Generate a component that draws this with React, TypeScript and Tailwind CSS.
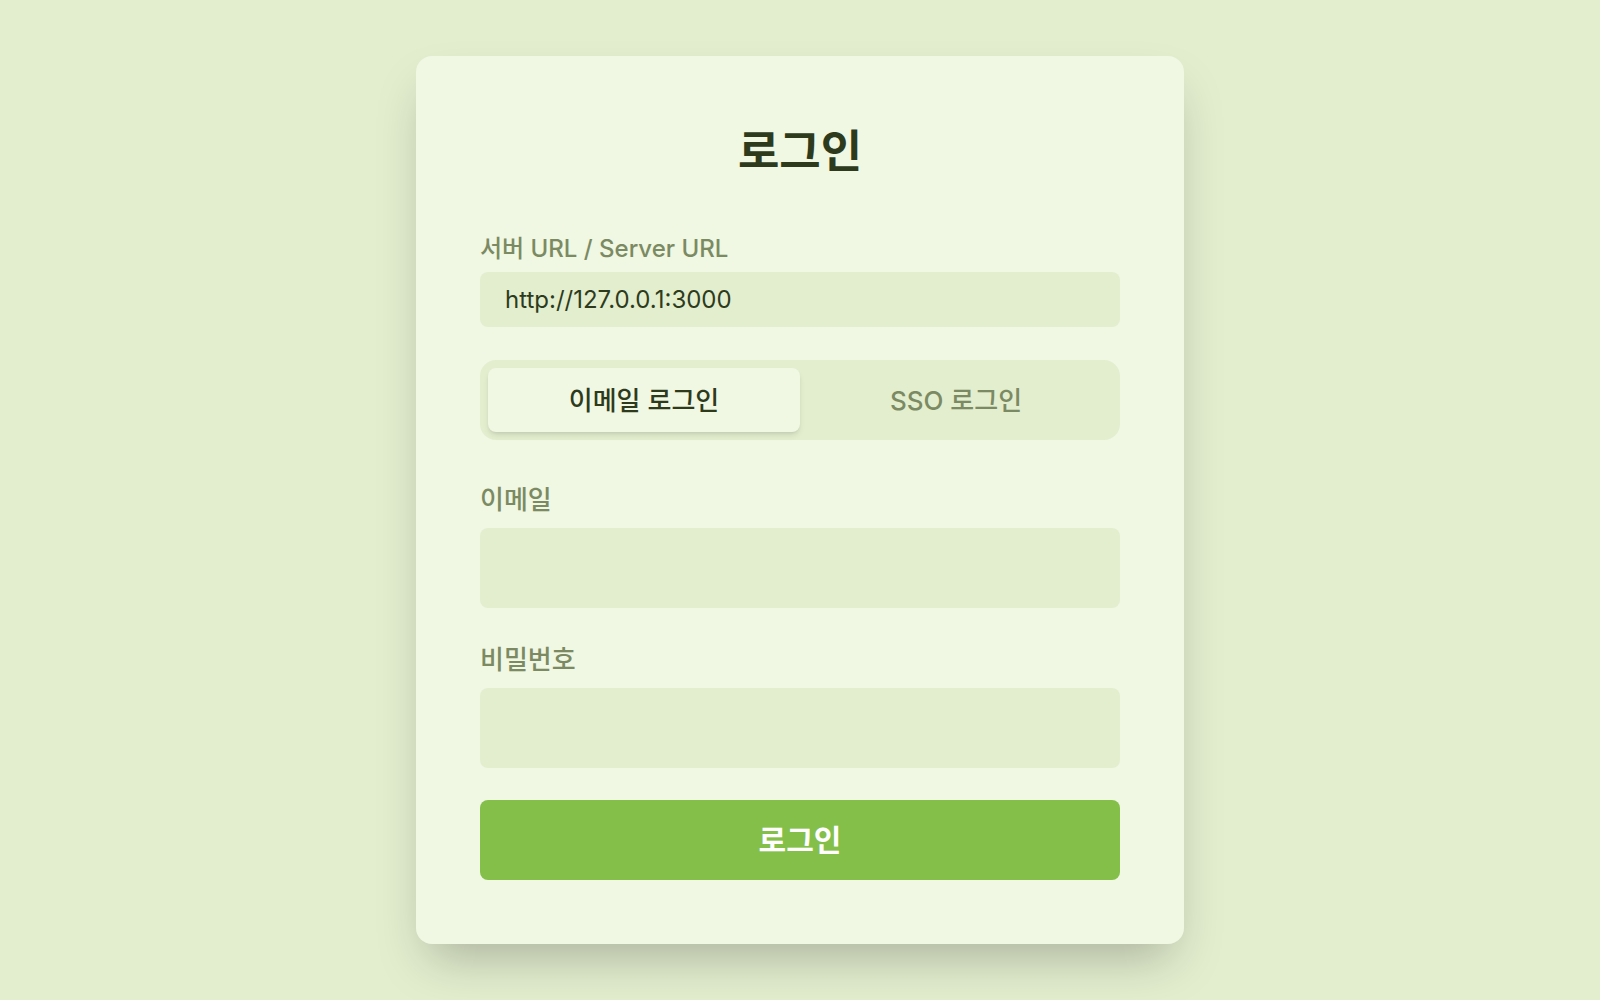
import React, { useState } from "react";

type Mode = "email" | "sso";

const font = { fontFamily: 'Inter, "Noto Sans CJK KR", sans-serif' };

function Field({
  label,
  type = "text",
  defaultValue,
  height,
  labelClass,
}: {
  label: string;
  type?: string;
  defaultValue?: string;
  height: string;
  labelClass: string;
}) {
  return (
    <label className="flex flex-col">
      <span className={`font-medium leading-[36px] text-[#7b8a62] ${labelClass}`}>{label}</span>
      <input
        type={type}
        defaultValue={defaultValue}
        className={`w-full rounded-lg bg-[#e3eecf] px-[25px] text-[24px] text-[#2d3b1c] outline-none ${height}`}
      />
    </label>
  );
}

export default function App() {
  const [mode, setMode] = useState<Mode>("email");

  const tab = (m: Mode) =>
    `flex-1 rounded-lg text-[26px] font-medium ${
      mode === m ? "bg-[#f0f7e3] text-[#2d3b1c] shadow-md" : "text-[#7b8a62]"
    }`;

  return (
    <div className="min-h-screen bg-[#e3eecf] pt-[56px]" style={font}>
      <div className="mx-auto w-[768px] rounded-2xl bg-[#f0f7e3] px-16 pb-16 pt-[66px] shadow-2xl">
        <h1 className="text-center text-[45px] font-bold leading-[60px] text-[#2d3b1c]">로그인</h1>

        <div className="mt-[49px]">
          <Field
            label="서버 URL / Server URL"
            defaultValue="http://127.0.0.1:3000"
            height="h-[55px]"
            labelClass="mb-[5px] text-[24px]"
          />
        </div>

        <div className="mt-[33px] flex h-20 rounded-2xl bg-[#e3eecf] p-2">
          <button onClick={() => setMode("email")} className={tab("email")}>
            이메일 로그인
          </button>
          <button onClick={() => setMode("sso")} className={tab("sso")}>
            SSO 로그인
          </button>
        </div>

        <div className="mt-[42px]">
          <Field label="이메일" type="email" height="h-20" labelClass="mb-[10px] text-[26px]" />
        </div>
        <div className="mt-[34px]">
          <Field label="비밀번호" type="password" height="h-20" labelClass="mb-[10px] text-[26px]" />
        </div>

        <button className="mt-8 h-20 w-full rounded-lg bg-[#84bf4a] text-[30px] font-semibold text-white">
          로그인
        </button>
      </div>
    </div>
  );
}
